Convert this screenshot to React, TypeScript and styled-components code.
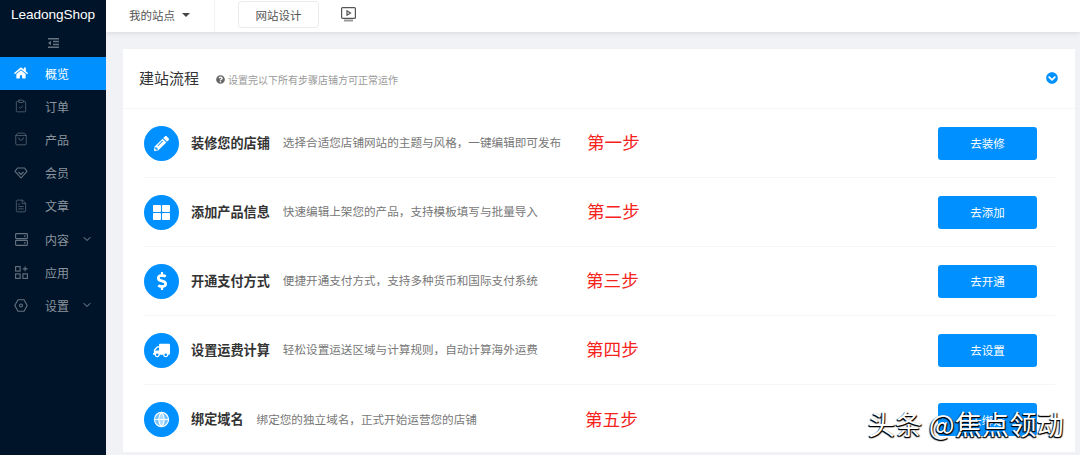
import React from 'react';
import styled, { createGlobalStyle } from 'styled-components';
import { FaChevronCircleDown, FaDollarSign, FaHome, FaPencilAlt, FaQuestionCircle, FaThLarge, FaTruck } from 'react-icons/fa';
import { ChevronDown, ClipboardCheck, FileText, Globe, ShoppingBag } from 'lucide-react';

const GlobalStyle = createGlobalStyle`
  html, body { margin: 0; padding: 0; height: 100%; overflow: hidden; }
  body { font-family: "Noto Sans CJK SC", "Liberation Sans", sans-serif; background: #f0f2f5; }
  * { box-sizing: border-box; }
`;

// --------------  Elements
const Page = styled.div`
  position: relative;
  display: flex;
  width: 1080px;
  height: 455px;
  overflow: hidden;
`;
const Sidebar = styled.aside`
  width: 106px;
  flex: none;
  background: #001429;
  display: flex;
  flex-direction: column;
`;
const Logo = styled.div`
  height: 28px;
  padding-left: 11px;
  display: flex;
  align-items: center;
  color: #fff;
  font-family: "Liberation Sans", sans-serif;
  font-size: 13.6px;
  letter-spacing: -0.05px;
`;
const Collapse = styled.div`
  height: 29px;
  display: flex;
  align-items: center;
  justify-content: center;
  color: #66727f;
`;
const MenuItem = styled.div<{ $active?: boolean }>`
  height: 33.2px;
  display: flex;
  align-items: center;
  padding: 0 0 1px 14px;
  gap: 17px;
  font-size: 12px;
  white-space: nowrap;
  color: ${props => (props.$active ? '#fff' : '#8b949e')};
  background: ${props => (props.$active ? '#0090ff' : 'transparent')};
`;
const MenuIcon = styled.span<{ $active?: boolean }>`
  width: 14px;
  height: 14px;
  flex: none;
  display: flex;
  align-items: center;
  justify-content: center;
  color: ${props => (props.$active ? '#fff' : '#66727f')};
`;
const MenuArrow = styled.span`
  display: flex;
  margin-left: -5px;
  color: #8b949e;
`;
const Main = styled.div`
  flex: 1;
  min-width: 0;
  display: flex;
  flex-direction: column;
`;
const Topbar = styled.header`
  height: 32px;
  flex: none;
  background: #fff;
  box-shadow: 0 1px 5px rgba(0, 0, 0, 0.1);
  display: flex;
  align-items: center;
`;
const SiteSwitch = styled.div`
  width: 109px;
  height: 100%;
  padding-left: 23px;
  padding-bottom: 3px;
  border-right: 1px solid #f2f2f2;
  display: flex;
  align-items: center;
  gap: 7px;
  font-size: 11.5px;
  color: #555;
`;
const Caret = styled.span`
  width: 0;
  height: 0;
  border-left: 4px solid transparent;
  border-right: 4px solid transparent;
  border-top: 4px solid #444;
`;
const DesignButton = styled.div`
  width: 81px;
  height: 27px;
  margin: 0 0 3px 23px;
  border: 1px solid #ececec;
  border-radius: 3px;
  display: flex;
  align-items: center;
  justify-content: center;
  font-size: 11.5px;
  color: #555;
`;
const PreviewIcon = styled.svg`
  margin: 0 0 3px 22px;
`;
const Content = styled.main`
  flex: 1;
  padding: 17px 5px 0 17px;
`;
const Card = styled.section`
  height: 403px;
  background: #fff;
  overflow: hidden;
`;
const CardHead = styled.div`
  height: 60px;
  padding: 0 16px;
  border-bottom: 1px solid #f5f5f5;
  display: flex;
  align-items: center;
`;
const CardTitle = styled.h1`
  margin: 0 17px 2px 0;
  font-size: 15px;
  font-weight: 400;
  color: #333;
`;
const Hint = styled.div`
  display: flex;
  align-items: center;
  gap: 3px;
  margin-top: 2px;
  font-size: 10px;
  color: #999;
`;
const HeadToggle = styled.span`
  margin: 0 1px 2px auto;
  display: flex;
  color: #0090ff;
`;
const Steps = styled.div`
  padding: 0 20px 0 21px;
`;
const Step = styled.div`
  height: 69px;
  display: flex;
  align-items: center;
  border-bottom: 1px solid #f5f5f5;
  &:last-child { border-bottom: 0; }
`;
const StepIntro = styled.div`
  width: 443px;
  flex: none;
  display: flex;
  align-items: center;
`;
const StepIcon = styled.span`
  width: 35px;
  height: 35px;
  flex: none;
  border-radius: 50%;
  background: #0090ff;
  color: #fff;
  display: flex;
  align-items: center;
  justify-content: center;
`;
const StepTitle = styled.strong`
  margin: 0 0 2px 12px;
  font-size: 13.15px;
  font-weight: 700;
  color: #333;
  white-space: nowrap;
`;
const StepText = styled.span`
  margin: 0 0 2px 13px;
  font-size: 11.6px;
  color: #777;
  white-space: nowrap;
`;
// the red labels were placed by hand on the original, so they drift a little
const StepMark = styled.span<{ $shift: number }>`
  flex: 1;
  margin: 0 0 3px ${props => props.$shift}px;
  font-size: 17.6px;
  color: #f5231c;
`;
const StepButton = styled.div`
  width: 99px;
  height: 33px;
  flex: none;
  margin-right: 18px;
  border-radius: 3px;
  background: #0090ff;
  color: #fff;
  font-size: 11.5px;
  display: flex;
  align-items: center;
  justify-content: center;
`;
const Watermark = styled.div`
  position: absolute;
  left: 868px;
  top: 405px;
  font-size: 27px;
  line-height: 38px;
  letter-spacing: 0.3px;
  color: #fff;
  white-space: nowrap;
  text-shadow: 1px 1px 1px #000, 0 1px 1px #000, -1px 1px 1px #000;
`;

// --------------  Icons
const LinesIcon = () => (
  <svg width="11" height="10" viewBox="0 0 11 10" fill="currentColor">
    <path d="M0 0h11v1.5H0zM5 2.8h6v1.5H5zM5 5.7h6v1.5H5zM0 8.5h11V10H0zM0 5l3-2.2v4.4z" />
  </svg>
);
const GemIcon = () => (
  <svg width="14" height="12" viewBox="0 0 14 12" fill="none" stroke="currentColor" strokeWidth="1.1">
    <path d="M3.5 1h7L13 4.3 7 11 1 4.3z" strokeLinejoin="round" />
    <path d="M4.5 5 7 7.5 9.500 5" />
  </svg>
);
const StackIcon = () => (
  <svg width="13" height="13" viewBox="0 0 13 13" fill="none" stroke="currentColor" strokeWidth="1.1">
    <rect x="0.6" y="0.6" width="11.800" height="5" rx="0.8" />
    <rect x="0.6" y="7.4" width="11.800" height="5" rx="0.8" />
    <path d="M9 3.100h1.600M9 9.900h1.600" />
  </svg>
);
const AppsIcon = () => (
  <svg width="13" height="13" viewBox="0 0 13 13" fill="none" stroke="currentColor" strokeWidth="1.1">
    <rect x="0.6" y="0.6" width="4.500" height="4.500" />
    <rect x="0.6" y="7.900" width="4.500" height="4.500" />
    <rect x="7.900" y="7.900" width="4.500" height="4.500" />
    <path d="M10.100 0.500v4.800M7.700 2.900h4.800" />
  </svg>
);
const HexIcon = () => (
  <svg width="14" height="13" viewBox="0 0 14 13" fill="none" stroke="currentColor" strokeWidth="1.1">
    <path d="M4 0.700h6L13.200 6.500 10 12.300H4L0.800 6.500z" strokeLinejoin="round" />
    <circle cx="7" cy="6.500" r="1.500" />
  </svg>
);

const menu = [
  { label: '概览', icon: <FaHome size={14} />, active: true },
  { label: '订单', icon: <ClipboardCheck size={14} strokeWidth={1.2} /> },
  { label: '产品', icon: <ShoppingBag size={14} strokeWidth={1.2} /> },
  { label: '会员', icon: <GemIcon /> },
  { label: '文章', icon: <FileText size={14} strokeWidth={1.2} /> },
  { label: '内容', icon: <StackIcon />, arrow: true },
  { label: '应用', icon: <AppsIcon /> },
  { label: '设置', icon: <HexIcon />, arrow: true },
];

const steps = [
  { title: '装修您的店铺', text: '选择合适您店铺网站的主题与风格，一键编辑即可发布', mark: '第一步', shift: 0, action: '去装修', icon: <FaPencilAlt size={15} /> },
  { title: '添加产品信息', text: '快速编辑上架您的产品，支持模板填写与批量导入', mark: '第二步', shift: 0, action: '去添加', icon: <FaThLarge size={17} /> },
  { title: '开通支付方式', text: '便捷开通支付方式，支持多种货币和国际支付系统', mark: '第三步', shift: -1, action: '去开通', icon: <FaDollarSign size={18} /> },
  { title: '设置运费计算', text: '轻松设置运送区域与计算规则，自动计算海外运费', mark: '第四步', shift: -1, action: '去设置', icon: <FaTruck size={17} style={{ transform: 'scaleX(-1)' }} /> },
  { title: '绑定域名', text: '绑定您的独立域名，正式开始运营您的店铺', mark: '第五步', shift: -2, action: '去绑定', icon: <Globe size={17} fill="rgba(255,255,255,0.45)" strokeWidth={1.6} /> },
];

export default function App() {
  return (
    <Page>
      <GlobalStyle />
      <Sidebar>
        <Logo>LeadongShop</Logo>
        <Collapse><LinesIcon /></Collapse>
        {menu.map(item => (
          <MenuItem key={item.label} $active={item.active}>
            <MenuIcon $active={item.active}>{item.icon}</MenuIcon>
            {item.label}
            {item.arrow && <MenuArrow><ChevronDown size={12} /></MenuArrow>}
          </MenuItem>
        ))}
      </Sidebar>
      <Main>
        <Topbar>
          <SiteSwitch>我的站点<Caret /></SiteSwitch>
          <DesignButton>网站设计</DesignButton>
          <PreviewIcon width="15" height="15" viewBox="0 0 15 15" fill="none" stroke="#555" strokeWidth="1.2">
            <rect x="0.6" y="0.6" width="13.800" height="10.800" rx="1" />
            <path d="M6 3.800v4.400L9.500 6z" />
            <path d="M3 13.500h9" stroke="#999" strokeWidth="2" />
          </PreviewIcon>
        </Topbar>
        <Content>
          <Card>
            <CardHead>
              <CardTitle>建站流程</CardTitle>
              <Hint><FaQuestionCircle size={9} color="#666" />设置完以下所有步骤店铺方可正常运作</Hint>
              <HeadToggle><FaChevronCircleDown size={12} /></HeadToggle>
            </CardHead>
            <Steps>
              {steps.map(step => (
                <Step key={step.title}>
                  <StepIntro>
                    <StepIcon>{step.icon}</StepIcon>
                    <StepTitle>{step.title}</StepTitle>
                    <StepText>{step.text}</StepText>
                  </StepIntro>
                  <StepMark $shift={step.shift}>{step.mark}</StepMark>
                  <StepButton>{step.action}</StepButton>
                </Step>
              ))}
            </Steps>
          </Card>
        </Content>
      </Main>
      <Watermark>头条 @焦点领动</Watermark>
    </Page>
  );
}
